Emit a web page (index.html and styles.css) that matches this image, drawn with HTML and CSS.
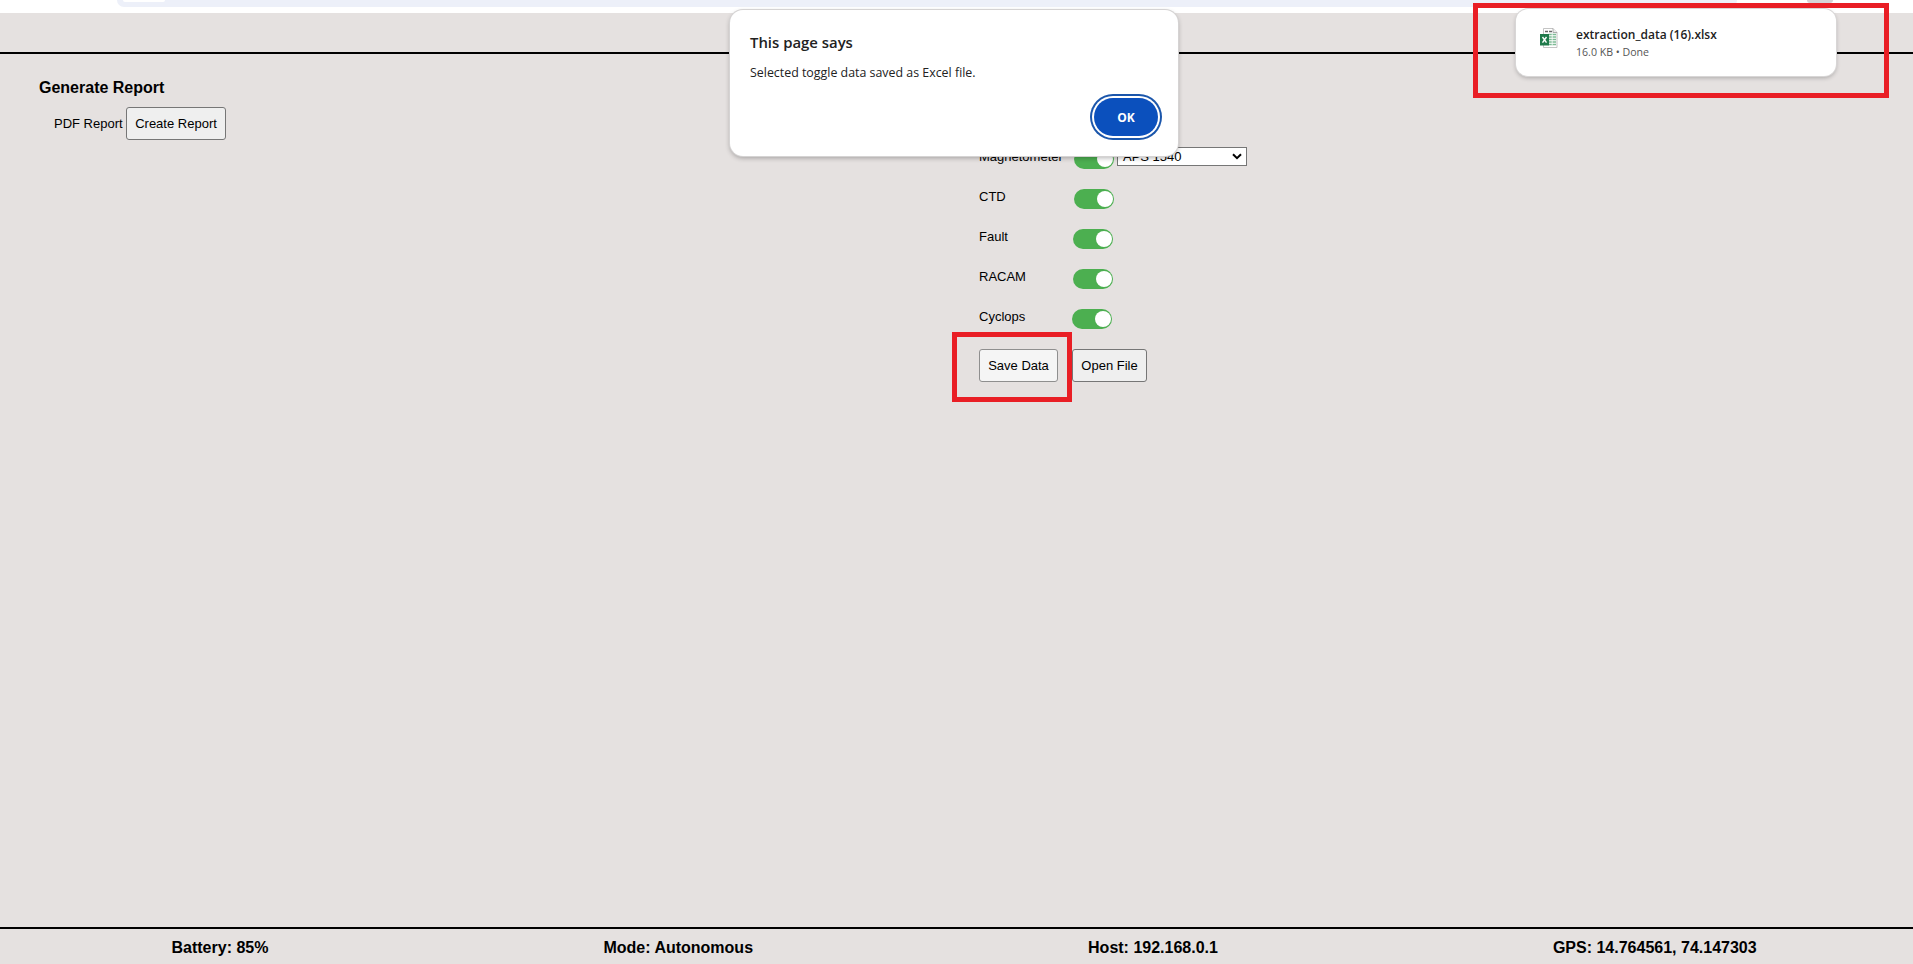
FILE: index.html
```html
<!DOCTYPE html>
<html lang="en">
<head>
<meta charset="utf-8">
<title>Generate Report</title>
<link rel="stylesheet" href="styles.css">
</head>
<body>
<div class="toolbar"><div class="omnibox"><span class="site-chip"></span></div><span class="avatar"></span></div>
<div class="app">
  <header class="app-header"></header>
  <main class="content">
    <section class="report">
      <h2>Generate Report</h2>
      <div class="report-row"><span class="report-label">PDF Report</span><button class="btn create">Create Report</button></div>
    </section>
    <section class="extract">
      <div class="row"><span class="name">Magnetometer</span><span class="toggle"></span>
        <div class="select"><span>APS 1540</span><svg width="10" height="7" viewBox="0 0 10 7"><path d="M1 1.2 L5 5.2 L9 1.2" fill="none" stroke="#000" stroke-width="2"/></svg></div></div>
      <div class="row"><span class="name">CTD</span><span class="toggle"></span></div>
      <div class="row"><span class="name less">Fault</span><span class="toggle"></span></div>
      <div class="row"><span class="name less">RACAM</span><span class="toggle"></span></div>
      <div class="row"><span class="name least">Cyclops</span><span class="toggle"></span></div>
      <div class="actions"><button class="btn save">Save Data</button><button class="btn open">Open File</button></div>
    </section>
  </main>
  <footer class="status">
    <span>Battery: 85%</span><span>Mode: Autonomous</span><span>Host: 192.168.0.1</span><span>GPS: 14.764561, 74.147303</span>
  </footer>
</div>
<div class="dialog">
  <div class="dialog-title"><span>This page says</span></div>
  <div class="dialog-text"><span>Selected toggle data saved as Excel file.</span></div>
  <button class="ok">OK</button>
</div>
<div class="download">
  <svg class="file-icon" width="18" height="20" viewBox="0 0 18 20">
    <path d="M3.500 .5h9.500l4 4v15H3.500z" fill="#fff" stroke="#b5b5b5" stroke-width=".8"/>
    <path d="M13 .5v4h4" fill="#eee" stroke="#999" stroke-width=".8"/>
    <path d="M5 3.500h3M9 3.500h3" stroke="#666" stroke-width="1.300"/>
    <path d="M8.500 6.500h7.500M8.500 9h7.500M8.500 11.500h7.500M8.500 14h7.500M8.500 16.500h7.500" stroke="#7dba95" stroke-width="1.700"/>
    <path d="M12.200 5.500v12" stroke="#fff" stroke-width=".8"/>
    <path d="M0 6h9v11.500H0z" fill="#1f7a4a"/>
    <path d="M2.500 9l4 5.700M6.500 9L2.500 14.700" stroke="#fff" stroke-width="1.400"/>
  </svg>
  <div class="file-info"><div class="file-name"><span>extraction_data (16).xlsx</span></div><div class="file-meta"><span>16.0 KB • Done</span></div></div>
</div>
<div class="mark mark-download"></div>
<div class="mark mark-save"></div>
</body>
</html>
```

FILE: styles.css
```css
* { box-sizing: border-box; }
body { margin: 0; height: 964px; overflow: hidden; display: flex; flex-direction: column; background: #e5e1e0; color: #000; font: 13px "Liberation Sans", Arial, sans-serif; }
.toolbar { height: 13px; flex: none; display: flex; align-items: flex-start; background: #fff; overflow: hidden; padding-left: 117px; }
.omnibox { width: 1620px; height: 7px; background: #edf0f9; border-radius: 0 0 14px 14px; padding-left: 6px; }
.site-chip { display: block; width: 42px; height: 2px; background: #fff; border-radius: 0 0 8px 8px; }
.avatar { width: 26px; height: 3px; margin-left: 70px; background: #d5d3d6; border-radius: 0 0 13px 13px; }
.app { flex: 1; display: flex; flex-direction: column; }
.app-header { height: 41px; border-bottom: 2px solid #000; }
.content { flex: 1; display: flex; }
.report { width: 979px; padding: 24px 0 0 39px; }
h2 { margin: 0; font-size: 16px; line-height: 20px; }
.report-row { display: flex; align-items: center; padding: 9px 0 0 15px; }
.report-label { width: 72px; }
.btn { height: 33px; padding: 0; font: 13px "Liberation Sans", Arial, sans-serif; color: #000; background: #efefef; border: 1px solid #767676; border-radius: 3px; }
.create { width: 100px; }
.extract { padding-top: 93px; }
.row { height: 40px; display: flex; align-items: flex-start; padding-top: 2px; }
.name { width: 95px; line-height: 16px; }
.less { width: 94px; }
.least { width: 93px; }
.toggle { width: 40px; height: 20px; border-radius: 10px; background: #4caf50; display: flex; justify-content: flex-end; padding: 2px 1.5px; }
.toggle::after { content: ""; width: 16px; height: 16px; border-radius: 50%; background: #fff; }
.select { width: 130px; height: 19px; margin: -2px 0 0 3px; padding: 0 4px 0 5px; display: flex; align-items: center; justify-content: space-between; background: #fff; border: 1px solid #767676; }
.actions { display: flex; gap: 14px; padding-top: 2px; }
.save { width: 79px; background: #f5f5f5; border-color: #8f8f8f; }
.open { width: 75px; }
.status { height: 37px; flex: none; border-top: 2px solid #000; display: flex; align-items: center; padding: 2px 0 0 171.500px; gap: 335px; font-size: 16px; font-weight: bold; white-space: nowrap; }
.dialog { position: absolute; left: 730px; top: 10px; width: 448px; height: 146px; padding: 23px 20px 0 20px; display: flex; flex-direction: column; background: #fff; border-radius: 13px; box-shadow: 0 0 0 1px #d5d3d3, 0 2px 5px rgba(0,0,0,.3); font-family: "Open Sans", "Noto Sans", sans-serif; color: #222; }
.dialog-title { font-size: 14.900px; line-height: 18px; font-weight: 600; }
.dialog-text { font-size: 12.400px; line-height: 18px; margin-top: 13px; }
.ok { align-self: flex-end; flex: none; width: 64px; height: 38px; margin-top: 16px; padding: 0; border: 0; border-radius: 19px; background: #0b50bd; color: #fff; font: bold 12px "Open Sans", sans-serif; box-shadow: 0 0 0 2px #fff, 0 0 0 4px #1b56ab; }
.download { position: absolute; left: 1516px; top: 9px; width: 320px; height: 67px; padding: 19px 0 0 24px; display: flex; align-items: flex-start; gap: 18px; background: #fff; border-radius: 12px; box-shadow: 0 0 0 1px #d8d6d6, 0 2px 4px rgba(0,0,0,.25); font-family: "Open Sans", "Noto Sans", sans-serif; }
.file-name { font-size: 12px; line-height: 18px; font-weight: 600; color: #222; margin-top: -2px; }
.file-meta { font-size: 10.600px; line-height: 16px; color: #555; }
.mark { position: absolute; border: 5px solid #e91e25; }
.mark-download { left: 1473px; top: 3px; width: 416px; height: 95px; }
.mark-save { left: 952px; top: 332px; width: 120px; height: 70px; }
```
